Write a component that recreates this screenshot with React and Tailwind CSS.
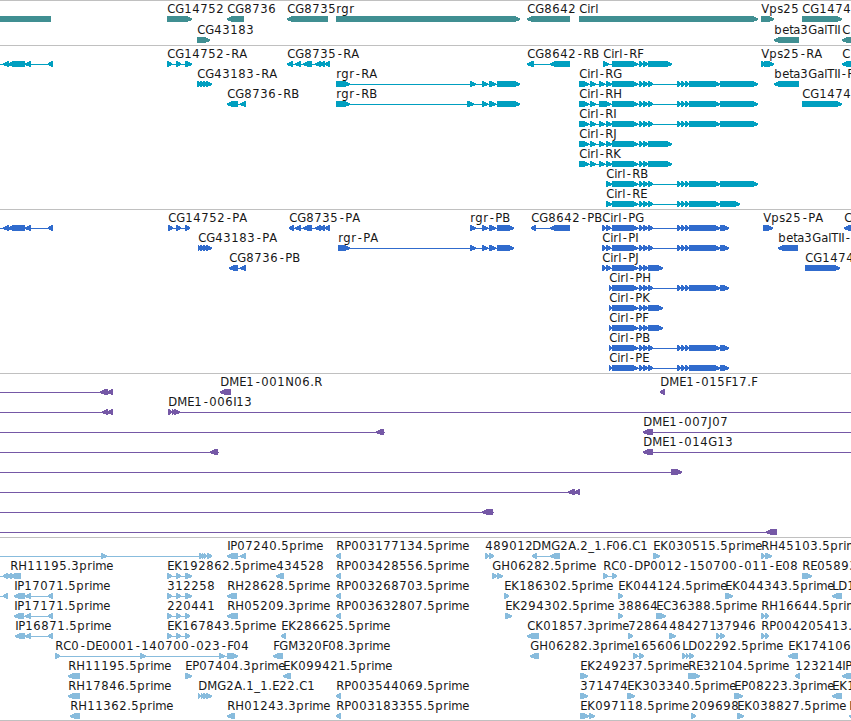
// pixel advance of each label character
const ADVANCE = {
  A: 8, B: 7, C: 8, D: 9, E: 7, F: 6, G: 9, H: 9, I: 3, J: 4, K: 8, L: 6, M: 10, N: 9,
  P: 7, R: 8, T: 7, V: 8, a: 7, b: 8, e: 7, g: 8, i: 3, l: 3, m: 11, p: 8, r: 5, s: 6, t: 4,
  '.': 4, '-': 7, _: 6,
};

// strand: 1 = forward, -1 = reverse
const fwd = (label, segs, line) => ({ label, segs, line, strand: 1 });
const rev = (label, segs, line) => ({ label, segs, line, strand: -1 });

const cirlMid = [[612, 638], [639, 643], [643, 648]];
const cirlStart = [[579, 589], [590, 596], [599, 605], [606, 612]];
const cirlLong = [...cirlMid, [648, 653], [677, 681], [681, 685], [685, 689], [689, 720]];
const cirlShort = [...cirlMid, [648, 672]];
const pgStart = [[602, 606], [606, 611]];
const cirlProtLong = [...cirlLong, [720, 729]];
const cirlProtShort = [...cirlMid, [648, 663]];
const leftGene = [[3, 9], [8, 25], [25, 31], [48, 53]];
const cg8735 = [[295, 301], [303, 312], [315, 321], [320, 325], [325, 330]];
const rp = [[336, 341]];
const triple = [[167, 172], [176, 181], [185, 192]];
const tripleShort = [[167, 172], [176, 181], [185, 190]];

const tracks = [
  {
    name: 'genes',
    color: 'text-[#408f92]',
    height: 'h-[45px]',
    row: 'h-[21px]',
    rows: [
      [
        rev('', [[-20, 51]]),
        fwd('CG14752', [[167, 192]]),
        rev('CG8736', [[227, 244]]),
        rev('CG8735', [[287, 328]]),
        fwd('rgr', [[336, 520]]),
        rev('CG8642', [[527, 570]]),
        fwd('Cirl', [[579, 758]]),
        fwd('Vps25', [[761, 774]]),
        fwd('CG1474', [[802, 842]]),
      ],
      [
        fwd('CG43183', [[197, 210]]),
        rev('beta3GalTII', [[774, 799]]),
        rev('C', [[842, 870]]),
      ],
    ],
  },
  {
    name: 'transcripts',
    color: 'text-[#009fc0]',
    height: 'h-[164px]',
    row: 'h-5',
    rows: [
      [
        rev('', leftGene, [0, 53]),
        fwd('CG14752-RA', triple),
        rev('CG8735-RA', [[287, 293], ...cg8735]),
        rev('CG8642-RB', [[527, 534], [550, 570]]),
        fwd('Cirl-RF', [[603, 609], ...cirlShort]),
        fwd('Vps25-RA', [[761, 765], [764, 774]]),
        rev('C', [[842, 870]]),
      ],
      [
        fwd('CG43183-RA', [[197, 201], [200, 204], [203, 207], [206, 212]]),
        fwd('rgr-RA', [[336, 350], [470, 476], [482, 488], [489, 496], [497, 520]]),
        fwd('Cirl-RG', [...cirlStart, ...cirlLong, [720, 758]]),
        rev('beta3GalTII-R', [[774, 799]]),
      ],
      [
        rev('CG8736-RB', [[227, 238], [240, 246]]),
        fwd('rgr-RB', [[336, 350], [467, 474], [482, 488], [489, 496], [497, 520]]),
        fwd('Cirl-RH', [[579, 589], [590, 596], [599, 611], ...cirlLong, [720, 758]]),
        fwd('CG1474', [[802, 842]]),
      ],
      [fwd('Cirl-RI', [...cirlStart, ...cirlLong, [720, 758]])],
      [fwd('Cirl-RJ', [...cirlStart, ...cirlShort])],
      [fwd('Cirl-RK', [...cirlStart, ...cirlShort])],
      [fwd('Cirl-RB', [[606, 612], ...cirlLong, [720, 758]])],
      [fwd('Cirl-RE', [[606, 612], ...cirlLong, [720, 740]])],
    ],
  },
  {
    name: 'proteins',
    color: 'text-[#306bcd]',
    height: 'h-[164px]',
    row: 'h-5',
    rows: [
      [
        rev('', leftGene, [0, 53]),
        fwd('CG14752-PA', [[168, 173], [176, 181], [185, 190]]),
        rev('CG8735-PA', [[289, 294], ...cg8735]),
        fwd('rgr-PB', [[470, 476], [482, 488], [489, 496], [497, 514]]),
        rev('CG8642-PB', [[531, 536], [550, 570]]),
        fwd('Cirl-PG', [...pgStart, ...cirlProtLong]),
        fwd('Vps25-PA', [[763, 773]]),
        rev('C', [[844, 870]]),
      ],
      [
        fwd('CG43183-PA', [[198, 201], [200, 204], [203, 207], [206, 212]]),
        fwd('rgr-PA', [[338, 350], [470, 476], [482, 488], [489, 496], [497, 514]]),
        fwd('Cirl-PI', [...pgStart, ...cirlProtLong]),
        rev('beta3GalTII-', [[778, 798]]),
      ],
      [
        rev('CG8736-PB', [[229, 238], [240, 246]]),
        fwd('Cirl-PJ', [...pgStart, ...cirlProtShort]),
        fwd('CG1474', [[805, 840]]),
      ],
      [fwd('Cirl-PH', [[609, 612], ...cirlProtLong])],
      [fwd('Cirl-PK', [[609, 612], ...cirlProtShort])],
      [fwd('Cirl-PF', [[609, 612], ...cirlProtShort])],
      [fwd('Cirl-PB', [[609, 612], ...cirlProtLong])],
      [fwd('Cirl-PE', [[609, 612], ...cirlProtLong])],
    ],
  },
  {
    name: 'bac-ends',
    color: 'text-[#7558a6]',
    height: 'h-[164px]',
    row: 'h-5',
    rows: [
      [
        rev('', [[100, 108], [107, 113]], [0, 113]),
        rev('DME1-001N06.R', [[220, 231]]),
        rev('DME1-015F17.F', [[660, 665]]),
      ],
      [
        rev('', [[102, 108], [107, 113]], [0, 113]),
        fwd('DME1-006I13', [[168, 172], [172, 175], [174, 180]], [168, 851]),
      ],
      [
        rev('', [[376, 384]], [0, 385]),
        rev('DME1-007J07', [[643, 653]], [643, 851]),
      ],
      [
        rev('', [[210, 218]], [0, 219]),
        rev('DME1-014G13', [[643, 653]], [643, 851]),
      ],
      [fwd('', [[671, 682]], [0, 682])],
      [rev('', [[568, 575], [574, 580]], [0, 580])],
      [rev('', [[482, 493]], [0, 494])],
      [rev('', [[766, 777]], [0, 777])],
    ],
  },
  {
    name: 'est',
    color: 'text-[#88bcdd]',
    height: 'h-[184px] border-b',
    row: 'h-5',
    rows: [
      [
        fwd('', [[101, 107], [199, 203], [202, 205], [204, 207], [207, 212]], [0, 212]),
        rev('IP07240.5prime', [[227, 238], [240, 246]]),
        rev('RP003177134.5prime', rp),
        fwd('489012', [[485, 489], [489, 494]]),
        rev('DMG2A.2_1.F06.C1', [[532, 537], [550, 560]]),
        fwd('EK030515.5prime', [[653, 660]]),
        fwd('RH45103.5prime', [[761, 765], [765, 772]]),
      ],
      [
        rev('', [[3, 8], [7, 12]], [0, 12]),
        rev('RH11195.3prime', [[10, 21]]),
        fwd('EK192862.5prime', triple),
        rev('434528', [[276, 284]]),
        rev('RP003428556.5prime', rp),
        fwd('GH06282.5prime', [[492, 497], [497, 503]]),
        fwd('RC0-DP0012-150700-011-E08', [[603, 608], [612, 617]]),
        fwd('RE05893', [[802, 812]]),
      ],
      [
        rev('', [[3, 8]], [0, 8]),
        rev('IP17071.5prime', [[14, 25], [25, 31], [48, 53]]),
        fwd('312258', triple),
        rev('RH28628.5prime', [[227, 237]]),
        rev('RP003268703.5prime', rp),
        fwd('EK186302.5prime', [[504, 509]]),
        fwd('EK044124.5prime', [[618, 623]]),
        fwd('EK044343.5prime', [[725, 733]]),
        rev('LD1', [[832, 842]]),
      ],
      [
        rev('IP17171.5prime', [[14, 24], [25, 31], [48, 53]]),
        fwd('220441', tripleShort),
        rev('RH05209.3prime', [[227, 238]]),
        rev('RP003632807.5prime', rp),
        fwd('EK294302.5prime', [[505, 512]]),
        fwd('38864', [[618, 623]]),
        fwd('EC36388.5prime', [[656, 666]]),
        fwd('RH16644.5prime', [[761, 765], [765, 769]]),
      ],
      [
        rev('IP16871.5prime', [[15, 25], [25, 31], [48, 53]]),
        fwd('EK167843.5prime', tripleShort),
        rev('EK286625.5prime', [[281, 286]]),
        rev('CK01857.3prime', [[527, 539]]),
        fwd('72864', [[628, 633]]),
        fwd('484271', [[669, 676]]),
        fwd('37946', [[716, 720], [720, 725]]),
        fwd('RP004205413.', [[761, 765], [765, 769]]),
      ],
      [
        fwd('RC0-DE0001-140700-023-F04', [[55, 60], [140, 146], [219, 225], [227, 238]]),
        rev('FGM320F08.3prime', [[273, 283]]),
        rev('GH06282.3prime', [[530, 539]]),
        fwd('165606', [[633, 638], [639, 644]]),
        fwd('LD02292.5prime', [[682, 686], [686, 689], [689, 694]]),
        rev('EK174106', [[788, 798]]),
      ],
      [
        rev('RH11195.5prime', [[68, 80]]),
        fwd('EP07404.3prime', [[185, 192]]),
        rev('EK099421.5prime', [[283, 291]]),
        fwd('EK249237.5prime', [[580, 588]]),
        fwd('RE32104.5prime', [[688, 700]]),
        rev('123214', [[795, 800]]),
        rev('IP', [[842, 860]]),
      ],
      [
        rev('RH17846.5prime', [[68, 80]]),
        fwd('DMG2A.1_1.E22.C1', [[198, 201], [201, 204], [203, 207], [206, 212]]),
        rev('RP003544069.5prime', rp),
        fwd('371474', [[580, 588]]),
        fwd('EK303340.5prime', [[627, 635]]),
        fwd('EP08223.3prime', [[734, 743]]),
        rev('EK1', [[832, 842]]),
      ],
      [
        rev('RH11362.5prime', [[70, 80]]),
        rev('RH01243.3prime', [[227, 235]]),
        rev('RP003183355.5prime', rp),
        fwd('EK097118.5prime', [[580, 589], [589, 595]]),
        fwd('209698', [[691, 696]]),
        fwd('EK038827.5prime', [[737, 744]]),
        rev('I', [[849, 860]]),
      ],
    ],
  },
];

function arrow([a, b], strand) {
  const head = Math.min(b - a, 6) - 1;
  if (strand > 0) {
    return `${a},15 ${b - head},15 ${b},17.4 ${b},18.9 ${b - head},21 ${a},21`;
  }
  return `${b},15 ${a + head},15 ${a},17.4 ${a},18.9 ${a + head},21 ${b},21`;
}

function charPositions(label, start) {
  let x = start + 0.3;
  return [...label]
    .map((ch) => {
      // the hyphen is narrow, so centre it in its cell
      const at = ch === '-' ? x + 1.4 : x;
      x += ADVANCE[ch] ?? 8;
      return at.toFixed(1);
    })
    .join(' ');
}

function Feature({ label, segs, line, strand }) {
  const [from, to] = line || [segs[0][0], segs[segs.length - 1][1]];
  return (
    <g>
      <rect x={from} y="18" width={to - from} height="1" />
      {segs.map((seg, i) => (
        <polygon key={i} points={arrow(seg, strand)} />
      ))}
      {label && (
        <text x={charPositions(label, segs[0][0])} y="12" className="fill-neutral-900">
          {label}
        </text>
      )}
    </g>
  );
}

function Track({ color, height, row, rows }) {
  return (
    <section className={`border-t border-[#c0c0c0] overflow-hidden ${height} ${color}`}>
      {rows.map((features, i) => (
        <svg
          key={i}
          className={`block w-full overflow-visible fill-current ${row}`}
          shapeRendering="crispEdges"
        >
          {features.map((f, j) => (
            <Feature key={j} {...f} />
          ))}
        </svg>
      ))}
    </section>
  );
}

export default function App() {
  return (
    <main className="flex flex-col w-[851px] h-[721px] overflow-hidden bg-white text-[11.6px] font-['DejaVu_Sans',sans-serif]">
      {tracks.map((track) => (
        <Track key={track.name} {...track} />
      ))}
    </main>
  );
}
